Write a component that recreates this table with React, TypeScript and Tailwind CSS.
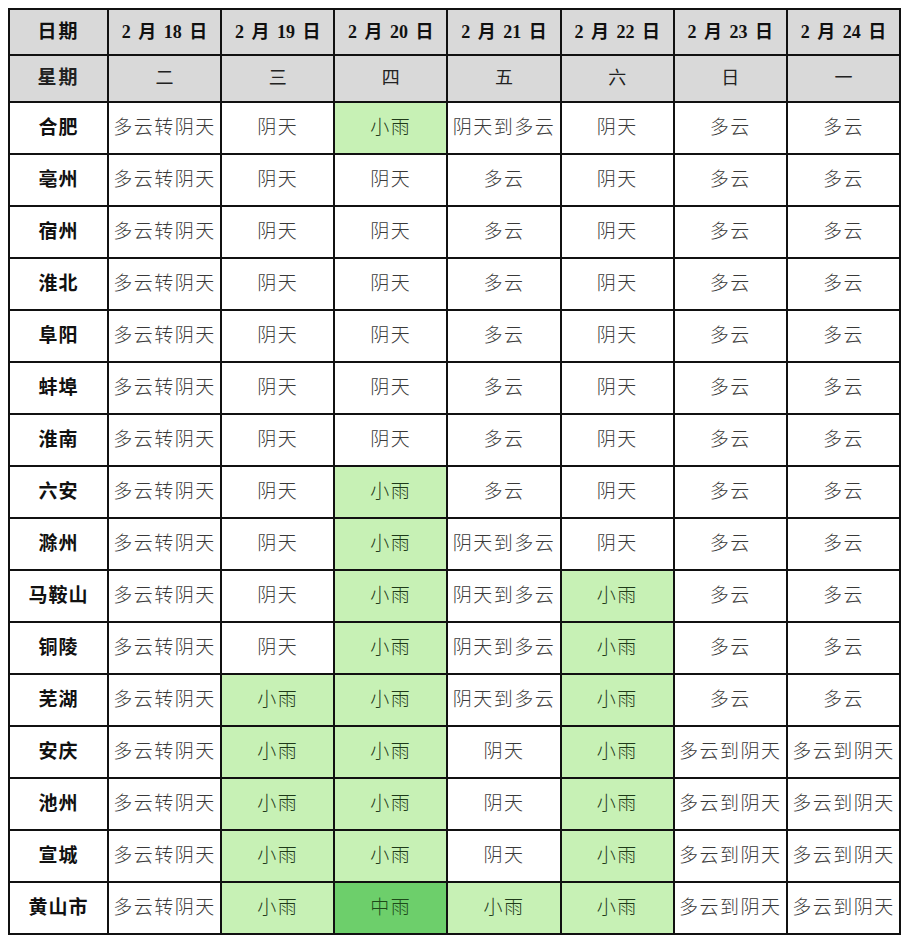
const dates = ["18", "19", "20", "21", "22", "23", "24"];
const weekdays = ["二", "三", "四", "五", "六", "日", "一"];

// g = 小雨 light green, G = 中雨 darker green
type Cell = [string, "" | "g" | "G"];

const A = "多云转阴天";
const B = "阴天到多云";
const C = "多云到阴天";

const plain: Cell[] = [[A, ""], ["阴天", ""], ["阴天", ""], ["多云", ""], ["阴天", ""], ["多云", ""], ["多云", ""]];

const rows: { city: string; cells: Cell[] }[] = [
  { city: "合肥", cells: [[A, ""], ["阴天", ""], ["小雨", "g"], [B, ""], ["阴天", ""], ["多云", ""], ["多云", ""]] },
  { city: "亳州", cells: plain },
  { city: "宿州", cells: plain },
  { city: "淮北", cells: plain },
  { city: "阜阳", cells: plain },
  { city: "蚌埠", cells: plain },
  { city: "淮南", cells: plain },
  { city: "六安", cells: [[A, ""], ["阴天", ""], ["小雨", "g"], ["多云", ""], ["阴天", ""], ["多云", ""], ["多云", ""]] },
  { city: "滁州", cells: [[A, ""], ["阴天", ""], ["小雨", "g"], [B, ""], ["阴天", ""], ["多云", ""], ["多云", ""]] },
  { city: "马鞍山", cells: [[A, ""], ["阴天", ""], ["小雨", "g"], [B, ""], ["小雨", "g"], ["多云", ""], ["多云", ""]] },
  { city: "铜陵", cells: [[A, ""], ["阴天", ""], ["小雨", "g"], [B, ""], ["小雨", "g"], ["多云", ""], ["多云", ""]] },
  { city: "芜湖", cells: [[A, ""], ["小雨", "g"], ["小雨", "g"], [B, ""], ["小雨", "g"], ["多云", ""], ["多云", ""]] },
  { city: "安庆", cells: [[A, ""], ["小雨", "g"], ["小雨", "g"], ["阴天", ""], ["小雨", "g"], [C, ""], [C, ""]] },
  { city: "池州", cells: [[A, ""], ["小雨", "g"], ["小雨", "g"], ["阴天", ""], ["小雨", "g"], [C, ""], [C, ""]] },
  { city: "宣城", cells: [[A, ""], ["小雨", "g"], ["小雨", "g"], ["阴天", ""], ["小雨", "g"], [C, ""], [C, ""]] },
  { city: "黄山市", cells: [[A, ""], ["小雨", "g"], ["中雨", "G"], ["小雨", "g"], ["小雨", "g"], [C, ""], [C, ""]] },
];

const bg = {
  "": "bg-white text-[#3a3a3a]",
  g: "bg-[#c7f1b5] text-[#1f3a1a]",
  G: "bg-[#6dcf6b] text-[#1d4a1a]",
};

export default function App() {
  return (
    <div className="min-h-[941px] w-[908px] bg-white p-2 font-['Liberation_Serif','Noto_Sans_CJK_SC',serif]">
      <table className="w-[893px] table-fixed border-collapse border-2 border-[#111]">
        <colgroup>
          <col className="w-[99px]" />
          {dates.map((d) => (
            <col key={d} />
          ))}
        </colgroup>
        <thead>
          <tr className="h-[46px] bg-[#d9d9d9]">
            <th className="border-2 border-[#111] text-[19px] font-bold tracking-[2px] text-[#111]">日期</th>
            {dates.map((d) => (
              <th
                key={d}
                className="border-2 border-[#111] text-[18px] font-bold text-[#111] whitespace-nowrap [word-spacing:3px]"
              >
                2 月 {d} 日
              </th>
            ))}
          </tr>
          <tr className="h-[47px] bg-[#d9d9d9]">
            <th className="border-2 border-[#111] text-[19px] font-bold tracking-[2px] text-[#222]">星期</th>
            {weekdays.map((w) => (
              <th key={w} className="border-2 border-[#111] text-[18px] font-normal text-[#222]">
                {w}
              </th>
            ))}
          </tr>
        </thead>
        <tbody>
          {rows.map((r) => (
            <tr key={r.city} className="h-[52px]">
              <td className="border-2 border-[#111] bg-white text-center text-[19px] font-bold tracking-[1px] text-[#111]">
                {r.city}
              </td>
              {r.cells.map(([t, k], i) => (
                <td
                  key={i}
                  className={`border-2 border-[#111] text-center text-[19px] font-light tracking-[1.5px] whitespace-nowrap ${bg[k]}`}
                >
                  {t}
                </td>
              ))}
            </tr>
          ))}
        </tbody>
      </table>
    </div>
  );
}
